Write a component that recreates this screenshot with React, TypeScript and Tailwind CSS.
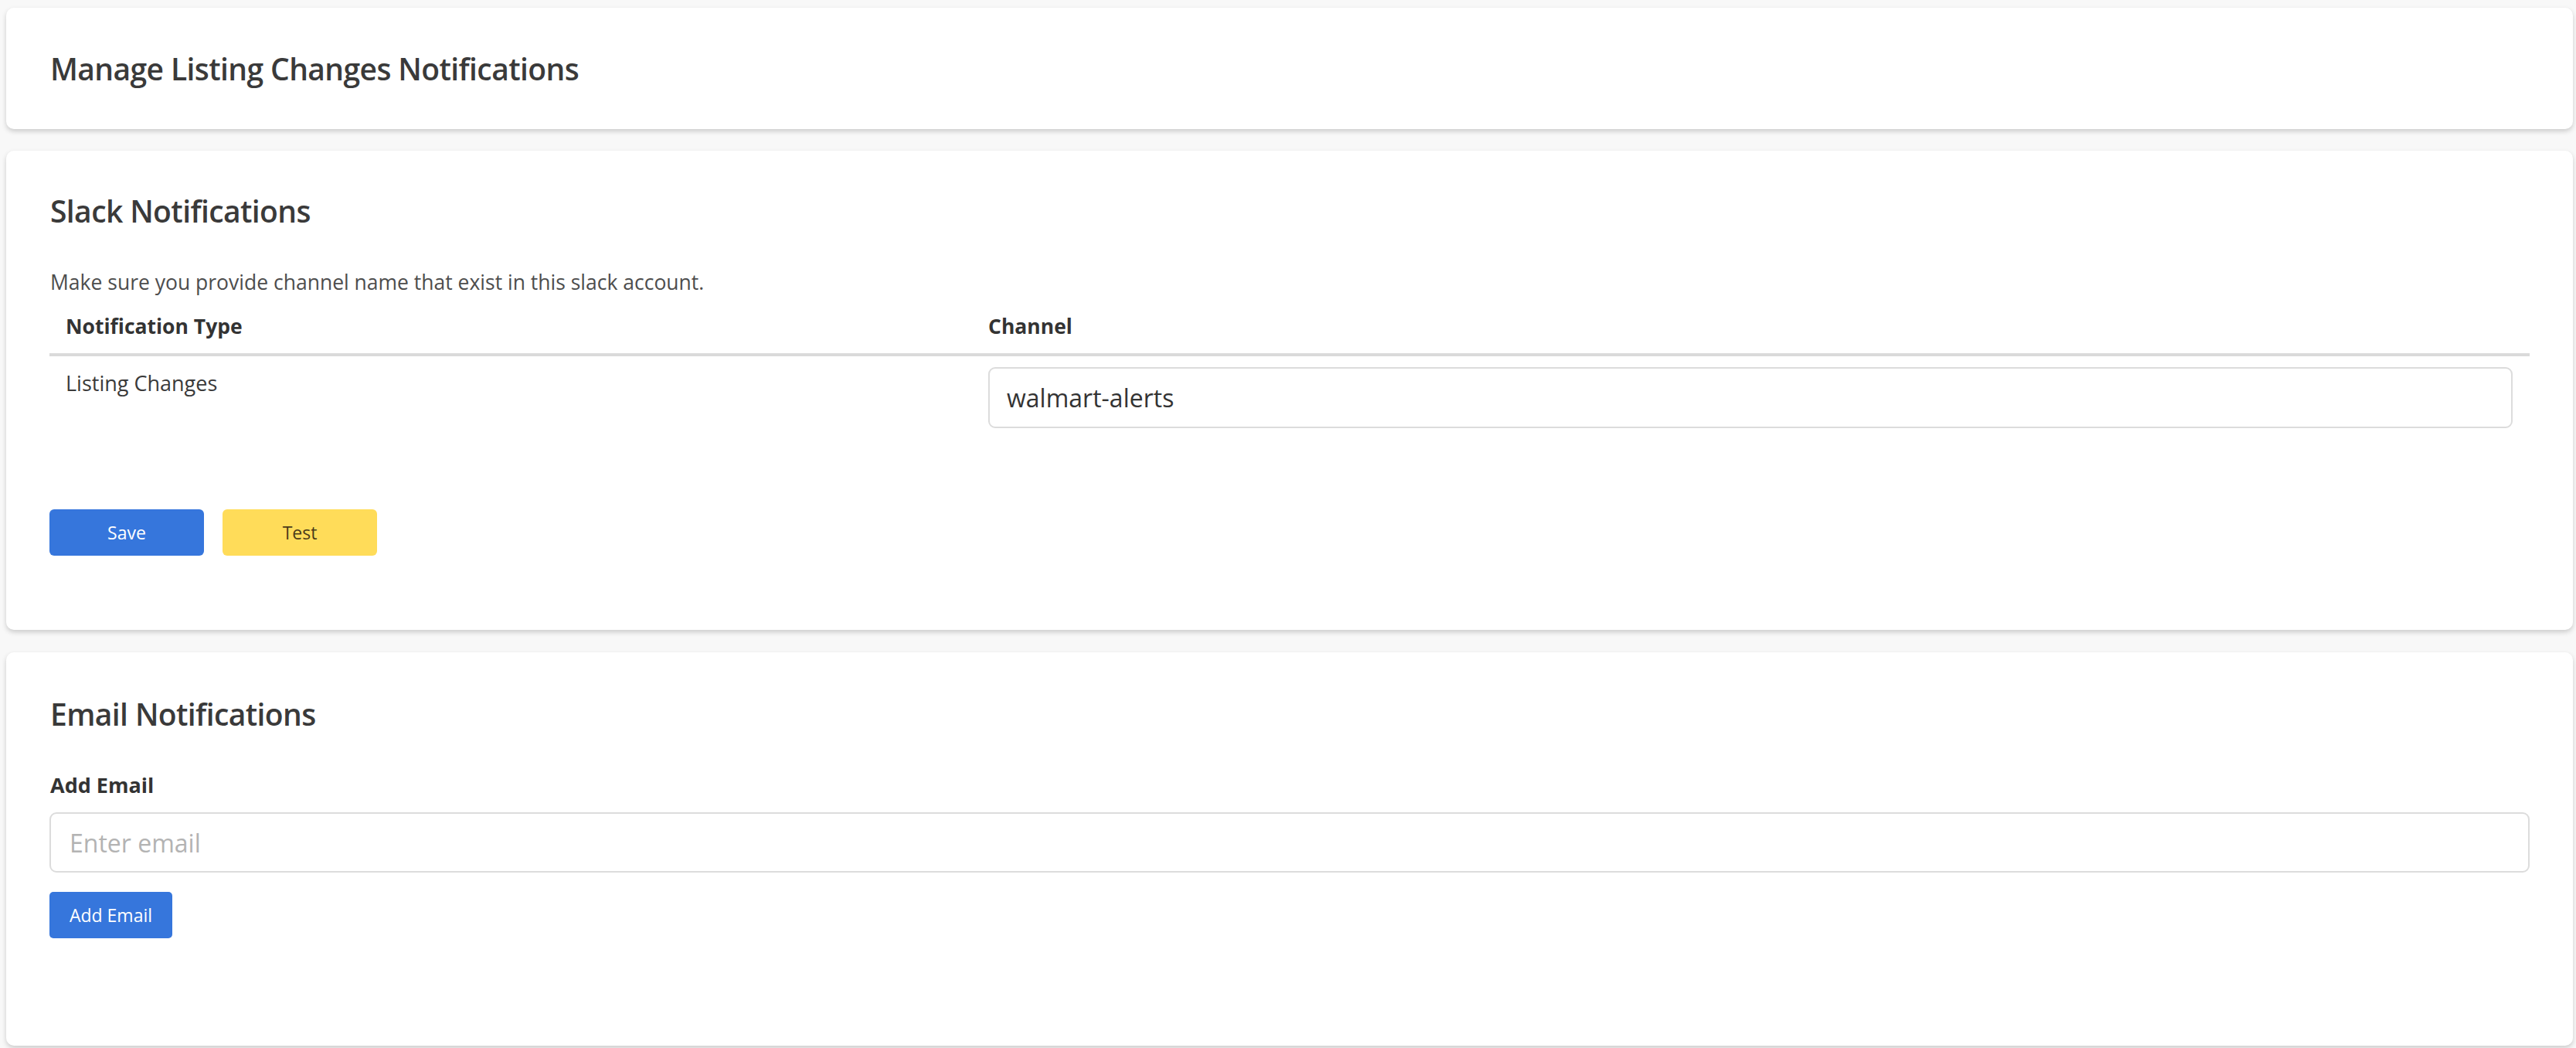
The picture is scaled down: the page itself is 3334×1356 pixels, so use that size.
import { useState } from "react";

const card = "bg-white rounded-[10px] shadow-[0_3px_6px_rgba(0,0,0,0.18)]";

export default function App() {
  const [channel, setChannel] = useState("walmart-alerts");
  const [email, setEmail] = useState("");

  return (
    <div className="min-h-screen bg-[#f8f8f8] pt-[10px] pl-[8px] pr-[4px] pb-[4px] font-['Open_Sans',sans-serif] text-[#333]">
      {/* page header */}
      <div className={`${card} h-[157px] px-[57px] flex items-center`}>
        <h1 className="text-[39px] leading-[48px] font-semibold tracking-[-0.6px] text-[#3a3a3a]">Manage Listing Changes Notifications</h1>
      </div>

      {/* slack */}
      <div className={`${card} mt-[28px] px-[56px] pt-[54px] pb-[96px]`}>
        <h2 className="text-[39px] leading-[48px] font-semibold tracking-[-0.6px] text-[#3a3a3a] px-[1px]">Slack Notifications</h2>
        <p className="mt-[49px] text-[26.5px] leading-[39px] text-[#4d4d4d] px-[1px]">
          Make sure you provide channel name that exist in this slack account.
        </p>

        <div className="grid grid-cols-[1195px_1fr] mt-[18px] border-b-[4px] border-[#dadada] pb-[15px]">
          <div className="px-[21px] text-[26.5px] leading-[39px] font-bold">Notification Type</div>
          <div className="px-[20px] text-[26.5px] leading-[39px] font-bold">Channel</div>
        </div>
        <div className="grid grid-cols-[1195px_1fr] pt-[14px]">
          <div className="px-[21px] pt-[1px] text-[27px] leading-[39px] text-[#3a3a3a]">Listing Changes</div>
          <div className="pl-[20px] pr-[22px]">
            <input
              value={channel}
              onChange={e => setChannel(e.target.value)}
              className="w-full h-[79px] border-[2px] border-[#dcdcdc] rounded-[9px] px-[22px] text-[32px] text-[#333] outline-none"
            />
          </div>
        </div>

        <div className="flex gap-[24px] mt-[105px]">
          <button className="w-[200px] h-[60px] rounded-[6px] bg-[#3676dc] text-white text-[23px]">Save</button>
          <button className="w-[200px] h-[60px] rounded-[6px] bg-[#ffdc59] text-[#4a3a1a] text-[23px]">Test</button>
        </div>
      </div>

      {/* email */}
      <div className={`${card} mt-[29px] px-[56px] pt-[56px] pb-[139px]`}>
        <h2 className="text-[39px] leading-[48px] font-semibold tracking-[-0.6px] text-[#3a3a3a] px-[1px]">Email Notifications</h2>
        <label className="block mt-[48px] text-[27px] leading-[39px] font-bold px-[1px]">Add Email</label>
        <input
          value={email}
          onChange={e => setEmail(e.target.value)}
          placeholder="Enter email"
          className="mt-[16px] block w-full h-[78px] border-[2px] border-[#dcdcdc] rounded-[9px] px-[24px] text-[32px] text-[#333] placeholder:text-[#b3b3b3] outline-none"
        />
        <button className="mt-[25px] w-[159px] h-[60px] rounded-[5px] bg-[#3676dc] text-white text-[23px]">Add Email</button>
      </div>
    </div>
  );
}
